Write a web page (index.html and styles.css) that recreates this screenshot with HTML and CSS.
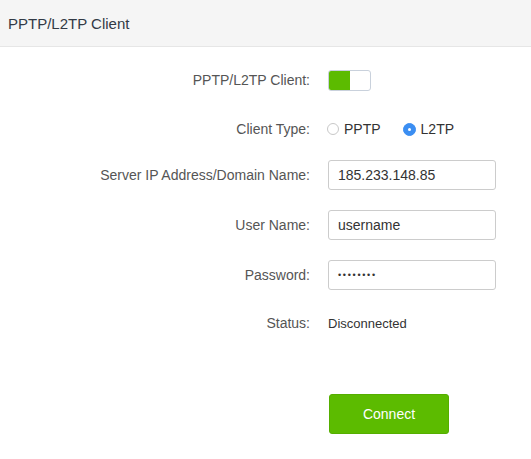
FILE: index.html
```html
<!DOCTYPE html>
<html>
<head>
<meta charset="utf-8">
<link rel="stylesheet" href="styles.css">
</head>
<body>
<div class="panel">
  <div class="panel-head">PPTP/L2TP Client</div>
  <form class="form">
    <div class="row row-toggle">
      <div class="label">PPTP/L2TP Client:</div>
      <div class="ctrl">
        <span class="toggle"><span class="toggle-on"></span><span class="toggle-off"></span></span>
      </div>
    </div>
    <div class="row row-radio">
      <div class="label">Client Type:</div>
      <div class="ctrl radios">
        <label class="radio"><span class="dot"></span>PPTP</label>
        <label class="radio checked"><span class="dot"></span>L2TP</label>
      </div>
    </div>
    <div class="row">
      <div class="label">Server IP Address/Domain Name:</div>
      <div class="ctrl"><div class="input">185.233.148.85</div></div>
    </div>
    <div class="row">
      <div class="label">User Name:</div>
      <div class="ctrl"><div class="input">username</div></div>
    </div>
    <div class="row row-pass">
      <div class="label">Password:</div>
      <div class="ctrl"><div class="input pass">••••••••</div></div>
    </div>
    <div class="row row-status">
      <div class="label">Status:</div>
      <div class="ctrl status">Disconnected</div>
    </div>
    <div class="actions">
      <button type="button" class="btn">Connect</button>
    </div>
  </form>
</div>
</body>
</html>
```
FILE: styles.css
```css
* { box-sizing: border-box; }
html, body { margin: 0; padding: 0; background: #fff; }
body { font-family: "Liberation Sans", Arial, Helvetica, sans-serif; color: #333; }
.panel-head {
  height: 47px;
  background: #f5f5f5;
  border-bottom: 1px solid #e6e6e6;
  padding-left: 8px;
  font-size: 15px;
  line-height: 47px;
  color: #323a45;
}
.form { padding-top: 18px; display: flex; flex-direction: column; }
.row { display: flex; align-items: center; height: 30px; margin-bottom: 20px; }
.row-toggle { margin-bottom: 19px; }
.row-radio { margin-bottom: 16px; }
.row-pass { margin-bottom: 18px; }
.label { width: 310px; text-align: right; font-size: 14px; color: #555; flex: none; }
.ctrl { margin-left: 18px; display: flex; align-items: center; }
.toggle {
  display: flex; width: 43px; height: 21px;
  border: 1px solid #c9d1dc; border-radius: 3px; overflow: hidden; background: #fff;
}
.toggle-on { width: 21px; background: #5cbb00; }
.toggle-off { flex: 1; }
.radios { margin-left: 17px; gap: 0; }
.radio { display: flex; align-items: center; font-size: 14px; color: #333; margin-right: 22px; }
.dot {
  width: 12px; height: 12px; border-radius: 50%;
  border: 1px solid #c8c8c8; background: #fff; margin-right: 5px; position: relative;
}
.radio.checked .dot { width: 13px; height: 13px; background: #3b8ef2; border-color: #3b8ef2; }
.radio.checked .dot::after {
  content: ""; position: absolute; left: 4px; top: 4px; width: 3px; height: 3px;
  border-radius: 50%; background: #fff;
}
.input {
  width: 168px; height: 30px; border: 1px solid #ccc; border-radius: 3px;
  padding-left: 9px; font-size: 14px; line-height: 28px; color: #333;
}
.input.pass { font-size: 9px; letter-spacing: 1.7px; }
.status { font-size: 13px; color: #333; }
.actions { padding-left: 329px; margin-top: 36px; }
.btn {
  width: 120px; height: 40px; background: #5cbb00; border: 1px solid #55ae00;
  border-radius: 3px; color: #fff; font-family: inherit; font-size: 14px; padding: 0;
}
```
